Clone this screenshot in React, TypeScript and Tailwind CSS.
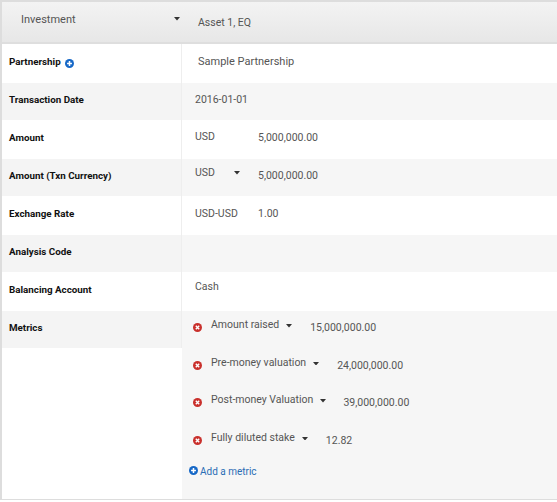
const font = { fontFamily: "Roboto, sans-serif" };

function Caret({ className = "" }: { className?: string }) {
  return (
    <svg width="6" height="3.5" viewBox="0 0 6 3.5" className={`shrink-0 ${className}`}>
      <path d="M0 0h6L3 3.5z" fill="#333" />
    </svg>
  );
}

function Plus({ className = "" }: { className?: string }) {
  return (
    <svg width="9" height="9" viewBox="0 0 10 10" className={`shrink-0 ${className}`}>
      <circle cx="5" cy="5" r="5" fill="#1668c7" />
      <path d="M5 2.3v5.4M2.3 5h5.4" stroke="#fff" strokeWidth="1.7" />
    </svg>
  );
}

function Remove() {
  return (
    <svg width="9" height="9" viewBox="0 0 10 10" className="shrink-0">
      <circle cx="5" cy="5" r="5" fill="#c9302c" />
      <path d="M3.1 3.1l3.8 3.8M6.9 3.1L3.1 6.9" stroke="#fff" strokeWidth="1.6" />
    </svg>
  );
}

function Row({
  label,
  gray,
  h,
  children,
  extra,
}: {
  label: string;
  gray?: boolean;
  h: string;
  children?: React.ReactNode;
  extra?: React.ReactNode;
}) {
  return (
    <div className={`flex ${h} ${gray ? "bg-[#f6f6f6]" : "bg-white"}`}>
      <div className={`w-[180px] shrink-0 flex items-center gap-[4px] pl-[7px] pb-[2px] text-[9.8px] font-bold text-[#111] border-r border-[#eeeeee] ${gray ? "bg-[#f4f4f4]" : ""}`}>
        {label}
        {extra}
      </div>
      <div className="flex-1 min-w-0 text-[#555] text-[10.5px]">{children}</div>
    </div>
  );
}

function Metric({ name, value, caretClass }: { name: string; value: string; caretClass: string }) {
  return (
    <div className="flex items-start h-[37.5px]">
      <div className="mt-[4px] ml-[11px] mr-[9px]"><Remove /></div>
      <span className="text-[10.5px] text-[#555] leading-[12px]">{name}</span>
      <Caret className={`mt-[5px] ${caretClass}`} />
      <span className="mt-[3px] text-[10.5px] text-[#555] leading-[12px]">{value}</span>
    </div>
  );
}

export default function App() {
  return (
    <div style={font} className="w-[557px] h-[502px] bg-white overflow-hidden">
      <div className="h-[500px] border-l-2 border-t-2 border-b border-[#dddddd] flex flex-col">
        <div className="h-[42px] shrink-0 flex bg-gradient-to-b from-[#f3f3f3] to-[#e7e7e7] border-b-2 border-[#dedede] text-[#555] text-[10.5px]">
          <div className="w-[180px] shrink-0 flex items-start pl-[19px] pt-[11px]">
            <span className="text-[11px] leading-[13px]">Investment</span>
            <Caret className="ml-[98px] mt-[4px]" />
          </div>
          <div className="pl-[16px] pt-[14px] leading-[13px]">Asset 1, EQ</div>
        </div>
        <Row label="Partnership" h="h-[39px]" extra={<Plus className="mt-[2px]" />}>
          <div className="pl-[16px] pt-[11px] leading-[13px] text-[11px]">Sample Partnership</div>
        </Row>
        <Row label="Transaction Date" gray h="h-[37px]">
          <div className="pl-[13px] pt-[10px] leading-[13px]">2016-01-01</div>
        </Row>
        <Row label="Amount" h="h-[39px]">
          <div className="flex pl-[13px] pt-[10px] leading-[13px]">
            <span className="w-[63px]">USD</span>
            <span className="mt-[1px]">5,000,000.00</span>
          </div>
        </Row>
        <Row label="Amount (Txn Currency)" gray h="h-[37px]">
          <div className="flex pl-[13px] pt-[7px] leading-[13px]">
            <span className="w-[39px]">USD</span>
            <Caret className="mt-[5px] mr-[18px]" />
            <span className="mt-[3px]">5,000,000.00</span>
          </div>
        </Row>
        <Row label="Exchange Rate" h="h-[39px]">
          <div className="flex pl-[13px] pt-[11px] leading-[13px]">
            <span className="w-[63px]">USD-USD</span>
            <span>1.00</span>
          </div>
        </Row>
        <Row label="Analysis Code" gray h="h-[37px]" />
        <Row label="Balancing Account" h="h-[39px]">
          <div className="pl-[13px] pt-[8px] leading-[13px]">Cash</div>
        </Row>
        <div className="flex flex-1 items-stretch">
          <div className="w-[180px] shrink-0 self-start h-[37px] flex items-center pl-[7px] pb-[2px] text-[9.8px] font-bold text-[#111] bg-[#f4f4f4] border-r border-[#eeeeee]">
            Metrics
          </div>
          <div className="flex-1 bg-[#f6f6f6] pt-[8px]">
            <Metric name="Amount raised" value="15,000,000.00" caretClass="ml-[7px] mr-[18px]" />
            <Metric name="Pre-money valuation" value="24,000,000.00" caretClass="ml-[7px] mr-[18px]" />
            <Metric name="Post-money Valuation" value="39,000,000.00" caretClass="ml-[7px] mr-[17px]" />
            <Metric name="Fully diluted stake" value="12.82" caretClass="ml-[7px] mr-[18px]" />
            <div className="flex items-center gap-[2px] pl-[7px] -mt-[5px] text-[10px] text-[#2a6db5]">
              <Plus className="-mt-[2px]" />
              Add a metric
            </div>
          </div>
        </div>
      </div>
    </div>
  );
}
